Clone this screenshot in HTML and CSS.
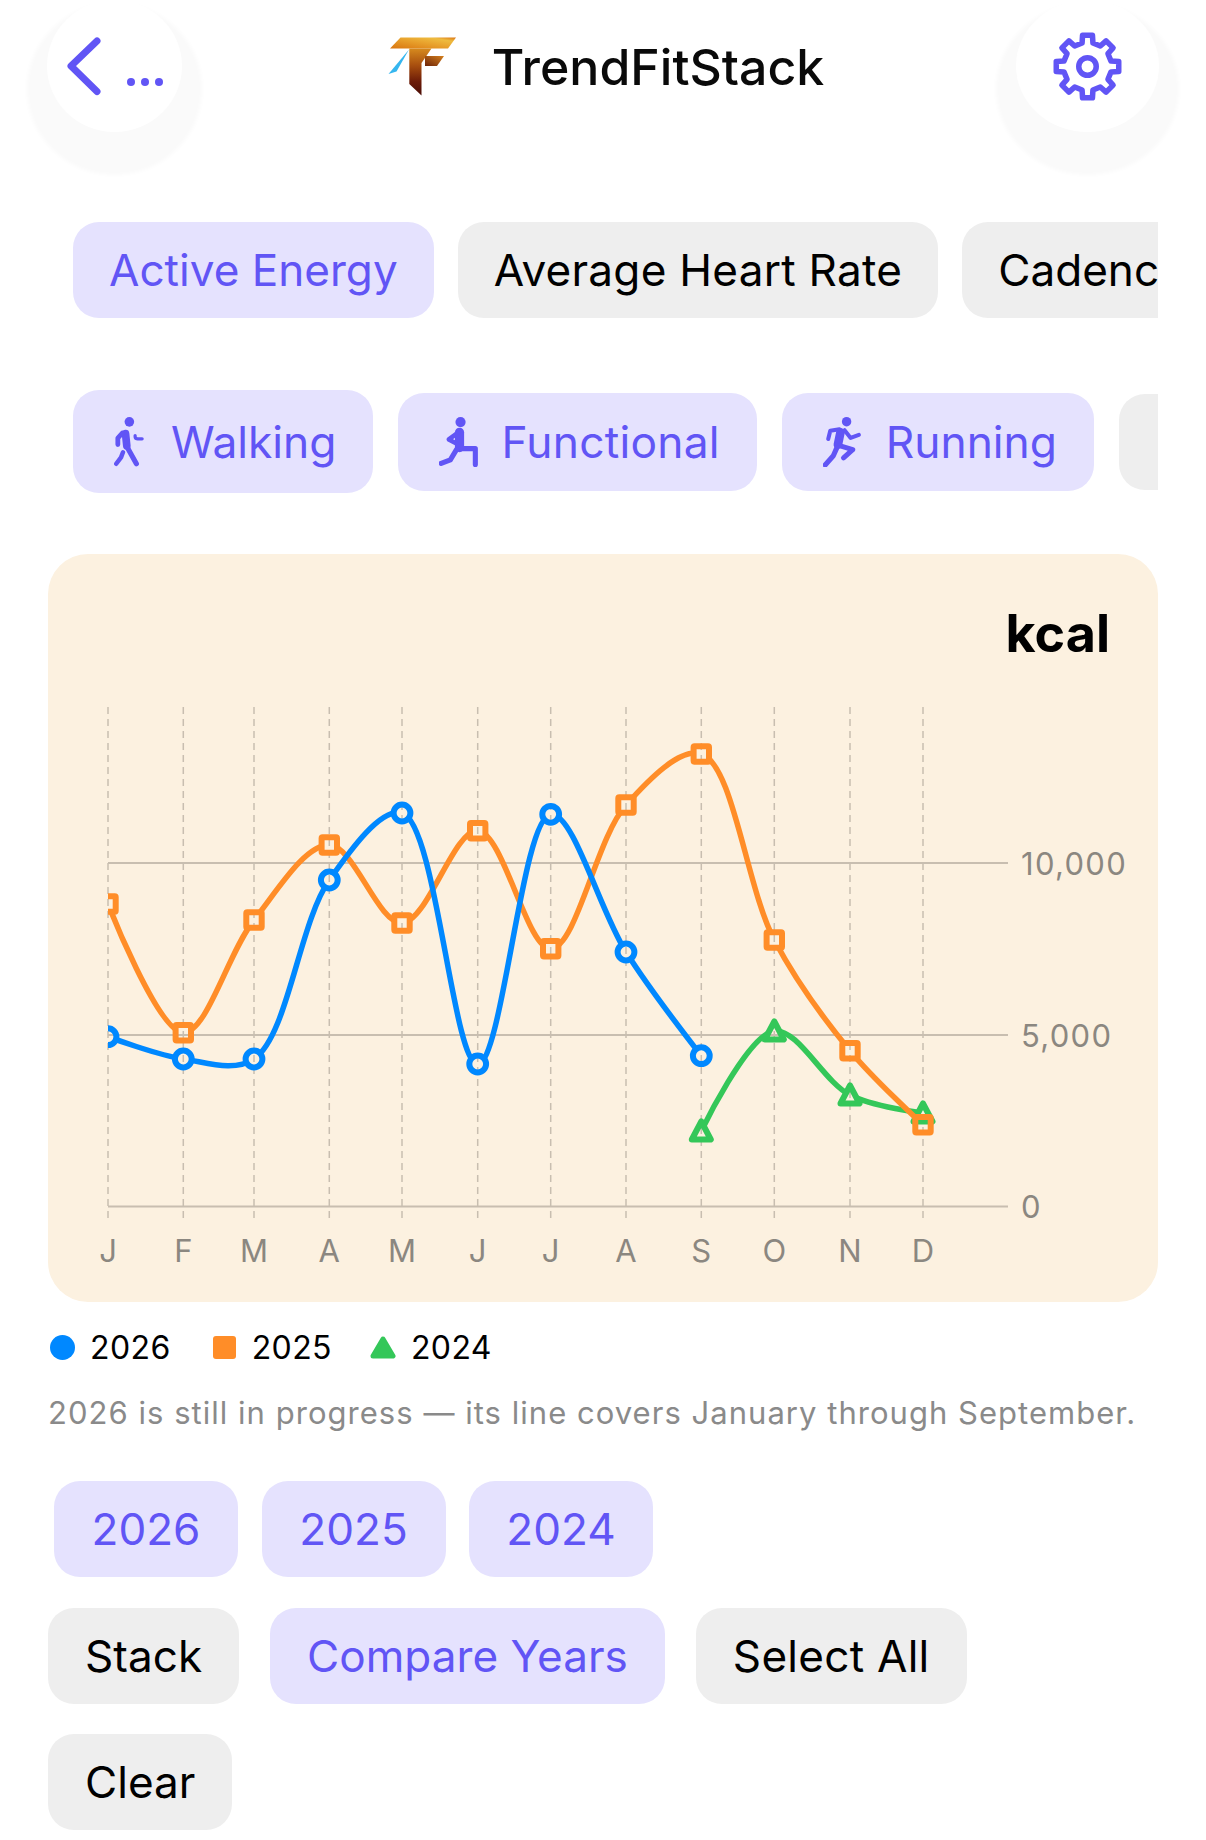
FILE: index.html
```html
<!DOCTYPE html>
<html lang="en">
<head>
    <meta charset="UTF-8">
    <meta name="viewport" content="width=device-width, initial-scale=1.0">
    <title>TrendFitStack</title>
    <link rel="stylesheet" href="styles.css">
</head>
<body>
    <header class="header">
        <button class="round-btn back-btn">
            <svg class="back-icon" viewBox="47 0 135 132">
                <polyline points="97,41 71,66 97,91.5" fill="none" stroke="#6155f5" stroke-width="7" stroke-linecap="round" stroke-linejoin="round"/>
                <circle cx="131" cy="82" r="4" fill="#6155f5"/>
                <circle cx="145" cy="82" r="4" fill="#6155f5"/>
                <circle cx="159" cy="82" r="4" fill="#6155f5"/>
            </svg>
        </button>
        <div class="brand">
            <svg class="logo" viewBox="380 30 90 75">
                <defs>
                    <linearGradient id="logo-top" x1="0" y1="1" x2="1" y2="0">
                        <stop offset="0" stop-color="#d9750f"/>
                        <stop offset="0.55" stop-color="#e9a52f"/>
                        <stop offset="0.8" stop-color="#eebb3f"/>
                        <stop offset="1" stop-color="#db7413"/>
                    </linearGradient>
                    <linearGradient id="logo-stem" x1="0" y1="0" x2="0" y2="1">
                        <stop offset="0" stop-color="#d68a1e"/>
                        <stop offset="0.35" stop-color="#a9500f"/>
                        <stop offset="0.7" stop-color="#6d1c08"/>
                        <stop offset="1" stop-color="#4a0d06"/>
                    </linearGradient>
                    <linearGradient id="logo-arm" x1="1" y1="0" x2="0" y2="1">
                        <stop offset="0" stop-color="#d5801c"/>
                        <stop offset="1" stop-color="#6d2409"/>
                    </linearGradient>
                </defs>
                <polygon points="390,48.5 400.5,37.5 456,37.5 448,48.5" fill="url(#logo-top)"/>
                <polygon points="409.3,48.5 431.5,48.5 421.5,63 421.5,95.5 409.3,84" fill="url(#logo-stem)"/>
                <polygon points="425,56 444,56 437,66 425,66" fill="url(#logo-arm)"/>
                <polygon points="409,49.5 388.5,74 396.5,71.5" fill="#35b6ef"/>
            </svg>
            <span class="brand-name">TrendFitStack</span>
        </div>
        <button class="round-btn gear-btn">
            <svg class="gear-icon" viewBox="-30 -30 60 60">
                <polygon points="-4.72,-20.46 -4.3,-27.16 4.3,-27.16 4.72,-20.46 11.13,-17.8 16.16,-22.25 22.25,-16.16 17.8,-11.13 20.46,-4.72 27.16,-4.3 27.16,4.3 20.46,4.72 17.8,11.13 22.25,16.16 16.16,22.25 11.13,17.8 4.72,20.46 4.3,27.16 -4.3,27.16 -4.72,20.46 -11.13,17.8 -16.16,22.25 -22.25,16.16 -17.8,11.13 -20.46,4.72 -27.16,4.3 -27.16,-4.3 -20.46,-4.72 -17.8,-11.13 -22.25,-16.16 -16.16,-22.25 -11.13,-17.8" fill="none" stroke="#6155f5" stroke-width="4.8" stroke-linejoin="round"/>
                <circle r="7.6" fill="none" stroke="#6155f5" stroke-width="4.8"/>
            </svg>
        </button>
    </header>

    <main class="content">
        <div class="chip-row metric-row">
            <span class="chip on">Active Energy</span>
            <span class="chip loose">Average Heart Rate</span>
            <span class="chip">Cadence</span>
        </div>

        <div class="chip-row sport-row">
            <span class="chip on tall">
                <svg class="sport-icon walk" viewBox="40 30 100 160">
                    <circle cx="88" cy="47" r="15" fill="#6155f5"/>
                    <g fill="none" stroke="#6155f5" stroke-linecap="round" stroke-linejoin="round">
                        <path d="M76 84 L80 122" stroke-width="24"/>
                        <path d="M66 82 L52 98 L52 118" stroke-width="15"/>
                        <path d="M80 124 L110 178" stroke-width="16"/>
                        <path d="M68 142 L62 158 L47 178" stroke-width="14"/>
                        <path d="M106 90 V94 Q107 100 114 100 H128" stroke-width="10"/>
                    </g>
                </svg>
                Walking
            </span>
            <span class="chip on loose">
                <svg class="sport-icon lunge" viewBox="0 0 38 49">
                    <circle cx="21" cy="5" r="5" fill="#6155f5"/>
                    <g fill="none" stroke="#6155f5" stroke-linecap="round" stroke-linejoin="round">
                        <path d="M20 15 V30" stroke-width="9"/>
                        <path d="M19 15 L9.5 22 L17 26" stroke-width="4.5"/>
                        <path d="M21 31 H35.5 V46.5" stroke-width="5"/>
                        <path d="M17 32 L11 42 L2 45.5" stroke-width="5"/>
                    </g>
                </svg>
                Functional
            </span>
            <span class="chip on">
                <svg class="sport-icon run" viewBox="0 0 37 49">
                    <circle cx="23" cy="4.6" r="4.6" fill="#6155f5"/>
                    <g fill="none" stroke="#6155f5" stroke-linecap="round" stroke-linejoin="round">
                        <path d="M17 15 L14.5 27" stroke-width="8.5"/>
                        <path d="M5 21.5 L7 13.5 L16 12" stroke-width="4"/>
                        <path d="M21 13 L27 20.5 L35 17.5" stroke-width="4"/>
                        <path d="M16 28 L29 32 L20 40" stroke-width="5"/>
                        <path d="M13.5 30 L10 38 L2 47" stroke-width="5"/>
                    </g>
                </svg>
                Running
            </span>
            <span class="chip short"></span>
        </div>

        <section class="chart-card">
            <div class="chart-unit">kcal</div>
            <svg id="chart" class="chart" viewBox="48 684 1110 618">
                <g class="grid-x">
                    <line x1="108" x2="108" y1="707" y2="1218"/>
                    <line x1="183.3" x2="183.3" y1="707" y2="1218"/>
                    <line x1="254" x2="254" y1="707" y2="1218"/>
                    <line x1="329.3" x2="329.3" y1="707" y2="1218"/>
                    <line x1="402" x2="402" y1="707" y2="1218"/>
                    <line x1="477.7" x2="477.7" y1="707" y2="1218"/>
                    <line x1="550.7" x2="550.7" y1="707" y2="1218"/>
                    <line x1="626" x2="626" y1="707" y2="1218"/>
                    <line x1="701.3" x2="701.3" y1="707" y2="1218"/>
                    <line x1="774.3" x2="774.3" y1="707" y2="1218"/>
                    <line x1="850" x2="850" y1="707" y2="1218"/>
                    <line x1="923" x2="923" y1="707" y2="1218"/>
                </g>
                <g class="grid-y">
                    <line x1="108" x2="1008" y1="863" y2="863"/>
                    <line x1="108" x2="1008" y1="1035" y2="1035"/>
                    <line x1="108" x2="1008" y1="1206.5" y2="1206.5"/>
                </g>
                <g class="axis-y">
                    <text x="1021" y="875">10,000</text>
                    <text x="1021" y="1047">5,000</text>
                    <text x="1021" y="1218">0</text>
                </g>
                <g class="axis-x">
                    <text x="108" y="1262">J</text>
                    <text x="183.3" y="1262">F</text>
                    <text x="254" y="1262">M</text>
                    <text x="329.3" y="1262">A</text>
                    <text x="402" y="1262">M</text>
                    <text x="477.7" y="1262">J</text>
                    <text x="550.7" y="1262">J</text>
                    <text x="626" y="1262">A</text>
                    <text x="701.3" y="1262">S</text>
                    <text x="774.3" y="1262">O</text>
                    <text x="850" y="1262">N</text>
                    <text x="923" y="1262">D</text>
                </g>
            </svg>
        </section>

        <div class="legend">
            <span class="legend-item"><i class="dot"></i>2026</span>
            <span class="legend-item"><i class="square"></i>2025</span>
            <span class="legend-item">
                <svg class="tri" viewBox="0 0 26 23"><polygon points="13,3 23,20 3,20" fill="#34c759" stroke="#34c759" stroke-width="5" stroke-linejoin="round"/></svg>
                2024
            </span>
        </div>
        <p class="note">2026 is still in progress — its line covers January through September.</p>

        <div class="btn-row year-row">
            <span class="chip on year">2026</span>
            <span class="chip on year">2025</span>
            <span class="chip on year">2024</span>
        </div>
        <div class="btn-row action-row">
            <span class="chip">Stack</span>
            <span class="chip on">Compare Years</span>
            <span class="chip loose">Select All</span>
        </div>
        <div class="btn-row last-row">
            <span class="chip">Clear</span>
        </div>
    </main>

    <script src="chart.js"></script>
</body>
</html>
```

FILE: styles.css
```css
* {
    margin: 0;
    padding: 0;
    box-sizing: border-box;
}
body {
    font-family: Inter, "Liberation Sans", sans-serif;
    background-color: #fff;
    color: #000;
    width: 1206px;
    height: 1840px;
    overflow: hidden;
}
.header {
    display: flex;
    justify-content: space-between;
    align-items: center;
    height: 132px;
    padding: 0 47px;
}
.round-btn {
    display: flex;
    align-items: center;
    justify-content: center;
    height: 132px;
    border: none;
    border-radius: 50%;
    background-color: #fff;
    box-shadow: 0 23px 4px 20px #fafafa;
}
.back-btn {
    width: 135px;
}
.back-icon {
    width: 135px;
    height: 132px;
}
.gear-btn {
    width: 143px;
}
.gear-icon {
    width: 69px;
    height: 69px;
}
.brand {
    display: flex;
    align-items: center;
    gap: 22px;
    margin-left: 6px;
}
.logo {
    width: 90px;
    height: 75px;
    margin-top: 3px;
}
.brand-name {
    margin-top: 2px;
    font-size: 50px;
    font-weight: 500;
    color: #0a0a0a;
}
.content {
    padding: 0 48px;
}
.chip-row {
    display: flex;
    align-items: center;
    gap: 24px;
    padding-left: 25px;
    overflow: hidden;
}
.metric-row {
    margin-top: 90px;
}
.sport-row {
    gap: 25px;
    margin-top: 72px;
    height: 103px;
}
.chip {
    display: flex;
    align-items: center;
    flex-shrink: 0;
    gap: 25px;
    height: 96px;
    padding: 0 36px;
    border-radius: 26px;
    background-color: #eee;
    font-size: 44.1px;
    white-space: nowrap;
}
.chip.on {
    background-color: #e5e2fe;
    color: #6155f5;
}
.chip.loose {
    letter-spacing: 0.25px;
}
.sport-row .chip {
    height: 98px;
    padding: 0 37px;
    font-size: 44.3px;
}
.sport-row .chip.tall {
    height: 103px;
}
.sport-row .chip.short {
    width: 100px;
    height: 96px;
}
.sport-icon {
    height: 50px;
    margin-left: 4px;
}
.sport-icon.walk {
    width: 32px;
    height: 52px;
}
.sport-icon.lunge {
    width: 39px;
    margin-right: -2px;
}
.sport-icon.run {
    width: 38px;
}
.chart-card {
    height: 748px;
    margin-top: 61px;
    border-radius: 40px;
    background-color: #fcf1e0;
}
.chart-unit {
    height: 130px;
    padding: 50px 48px 0 0;
    text-align: right;
    font-size: 52px;
    font-weight: 700;
    line-height: 60px;
}
.chart {
    display: block;
    width: 1110px;
    height: 618px;
}
.grid-x line {
    stroke: #c8beb0;
    stroke-width: 1.5;
    stroke-dasharray: 7 5;
}
.grid-y line {
    stroke: #c8beb0;
    stroke-width: 2;
}
.axis-y text,
.axis-x text {
    font-size: 31px;
    fill: #8b8780;
}
.axis-y text {
    letter-spacing: 1.3px;
}
.axis-x text {
    text-anchor: middle;
}
.legend {
    display: flex;
    align-items: center;
    gap: 38px;
    margin-top: 28px;
    height: 34px;
    font-size: 32px;
    letter-spacing: 0.4px;
}
.legend-item {
    display: flex;
    align-items: center;
    gap: 15px;
}
.dot {
    width: 25px;
    height: 25px;
    margin-left: 2px;
    border-radius: 50%;
    background-color: #0088ff;
}
.square {
    width: 23px;
    height: 23px;
    margin: 0 1px 0 4px;
    border-radius: 3px;
    background-color: #ff8d28;
}
.tri {
    width: 26px;
    height: 23px;
}
.note {
    margin-top: 30px;
    font-size: 31px;
    line-height: 38px;
    letter-spacing: 1.03px;
    color: #8a8a8a;
}
.btn-row {
    display: flex;
    gap: 31px;
    margin-top: 31px;
}
.action-row .chip,
.last-row .chip {
    padding: 0 37px;
}
.year-row {
    gap: 23.5px;
    margin-top: 49px;
    padding-left: 6px;
}
.last-row {
    margin-top: 30px;
}
.year {
    justify-content: center;
    width: 184px;
}
```

FILE: chart.js
```js
const NS = 'http://www.w3.org/2000/svg';
const chart = document.getElementById('chart');
const xs = [108, 183.3, 254, 329.3, 402, 477.7, 550.7, 626, 701.3, 774.3, 850, 923];

// y positions already in chart units, null = no data for that month
const series = [
    { id: 'y2024', color: '#34c759', mark: 'triangle', ys: [null, null, null, null, null, null, null, null, 1131, 1031, 1095, 1113] },
    { id: 'y2025', color: '#ff8d28', mark: 'square', ys: [904, 1032.7, 920, 845, 923, 830.7, 948.7, 805, 754, 940, 1050.7, 1124.7] },
    { id: 'y2026', color: '#0088ff', mark: 'circle', ys: [1036.7, 1059, 1059, 880, 813, 1064, 814.3, 952, 1055.7, null, null, null] }
];

function el(name, attrs) {
    const node = document.createElementNS(NS, name);
    Object.keys(attrs).forEach(key => node.setAttribute(key, attrs[key]));
    return node;
}

// control point for centripetal catmull-rom, a/b = sqrt of chord lengths
function control(near, far, back, a, b) {
    if (a === 0) return near;
    return [0, 1].map(k =>
        (a * a * far[k] - b * b * back[k] + (2 * a * a + 3 * a * b + b * b) * near[k]) / (3 * a * (a + b))
    );
}

function curve(pts) {
    const root = (p, q) => Math.sqrt(Math.hypot(q[0] - p[0], q[1] - p[1]));
    let d = `M${pts[0][0]} ${pts[0][1]}`;
    for (let i = 0; i < pts.length - 1; i++) {
        const p0 = pts[Math.max(i - 1, 0)];
        const p1 = pts[i];
        const p2 = pts[i + 1];
        const p3 = pts[Math.min(i + 2, pts.length - 1)];
        const d1 = root(p0, p1);
        const d2 = root(p1, p2);
        const d3 = root(p2, p3);
        const c1 = control(p1, p2, p0, d1, d2);
        const c2 = control(p2, p1, p3, d3, d2);
        d += ` C${c1[0]} ${c1[1]} ${c2[0]} ${c2[1]} ${p2[0]} ${p2[1]}`;
    }
    return d;
}

function marker(kind, x, y) {
    if (kind === 'circle') return el('circle', { cx: x, cy: y, r: 8.4 });
    if (kind === 'square') return el('rect', { x: x - 7.7, y: y - 7.7, width: 15.4, height: 15.4, rx: 1 });
    return el('polygon', { points: `${x},${y - 9.5} ${x + 9.5},${y + 8.5} ${x - 9.5},${y + 8.5}` });
}

const defs = el('defs', {});
const clip = el('clipPath', { id: 'plot' });
clip.appendChild(el('rect', { x: 108, y: 684, width: 1050, height: 618 }));
defs.appendChild(clip);
chart.appendChild(defs);

const plot = el('g', { 'clip-path': 'url(#plot)' });
chart.appendChild(plot);

series.forEach(s => {
    const pts = [];
    s.ys.forEach((y, i) => {
        if (y !== null) pts.push([xs[i], y]);
    });

    // the line stops at the edge of each hollow marker
    const mask = el('mask', { id: `holes-${s.id}`, maskUnits: 'userSpaceOnUse', x: 48, y: 684, width: 1110, height: 618 });
    mask.appendChild(el('rect', { x: 48, y: 684, width: 1110, height: 618, fill: '#fff' }));
    pts.forEach(p => {
        const hole = marker(s.mark, p[0], p[1]);
        hole.setAttribute('fill', '#000');
        mask.appendChild(hole);
    });
    defs.appendChild(mask);

    plot.appendChild(el('path', {
        d: curve(pts),
        fill: 'none',
        stroke: s.color,
        'stroke-width': 5.5,
        mask: `url(#holes-${s.id})`
    }));

    pts.forEach(p => {
        const mark = marker(s.mark, p[0], p[1]);
        mark.setAttribute('fill', 'none');
        mark.setAttribute('stroke', s.color);
        mark.setAttribute('stroke-width', 6);
        mark.setAttribute('stroke-linejoin', 'round');
        plot.appendChild(mark);
    });
});
```
